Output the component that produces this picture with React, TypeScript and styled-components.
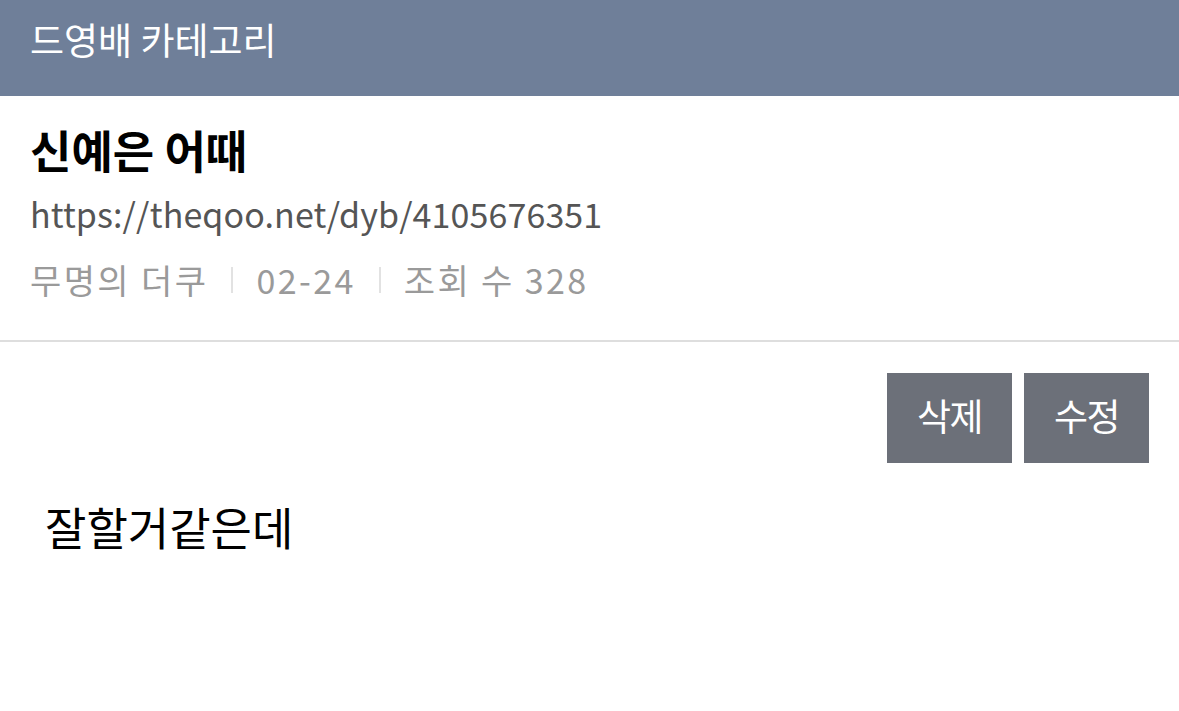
import React from "react";
import styled, { createGlobalStyle } from "styled-components";

const GlobalStyle = createGlobalStyle`
  body {
    margin: 0;
    background: #fff;
    font-family: "Noto Sans CJK KR", "Noto Sans", sans-serif;
  }
`;

const Page = styled.div`
  width: 1179px;
  min-height: 711px;
  background: #fff;
`;

const Header = styled.header`
  height: 96px;
  background: #6f7f99;
  display: flex;
  align-items: center;
  padding: 0 30px;
  box-sizing: border-box;
`;

const HeaderTitle = styled.h1`
  margin: 0 0 18px;
  font-size: 37px;
  font-weight: 400;
  color: #fff;
`;

const PostHead = styled.section`
  padding: 22px 30px 28px;
  border-bottom: 2px solid #dedede;
  display: flex;
  flex-direction: column;
`;

const Title = styled.h2`
  margin: 0;
  font-size: 45px;
  font-weight: 700;
  color: #000;
  line-height: 64px;
`;

const Url = styled.div`
  font-size: 34px;
  color: #555;
  line-height: 64px;
  letter-spacing: 0.1px;
`;

const Meta = styled.div`
  display: flex;
  align-items: center;
  font-size: 34px;
  color: #9a9a9a;
  line-height: 64px;
  letter-spacing: 2.4px;
  padding-top: 2px;
`;

const Divider = styled.span`
  width: 2px;
  height: 26px;
  background: #e2e2e2;
  margin: 0 23px;
`;

const Actions = styled.div`
  display: flex;
  justify-content: flex-end;
  gap: 12px;
  padding: 31px 30px 0;
`;

const ActionButton = styled.button`
  width: 125px;
  height: 90px;
  border: none;
  background: #6c7079;
  color: #fff;
  font-family: "Noto Sans CJK KR", sans-serif;
  font-size: 37px;
  letter-spacing: -1.5px;
  padding: 0 0 6px;
`;

const Body = styled.div`
  padding: 31px 45px;
  font-size: 45px;
  color: #000;
`;

export default function App() {
  const meta = ["무명의 더쿠", "02-24", "조회 수 328"];
  return (
    <Page>
      <GlobalStyle />
      <Header>
        <HeaderTitle>드영배 카테고리</HeaderTitle>
      </Header>
      <PostHead>
        <Title>신예은 어때</Title>
        <Url>https://theqoo.net/dyb/4105676351</Url>
        <Meta>
          {meta.map((m, i) => (
            <React.Fragment key={m}>
              {i > 0 && <Divider />}
              <span>{m}</span>
            </React.Fragment>
          ))}
        </Meta>
      </PostHead>
      <Actions>
        <ActionButton>삭제</ActionButton>
        <ActionButton>수정</ActionButton>
      </Actions>
      <Body>잘할거같은데</Body>
    </Page>
  );
}
